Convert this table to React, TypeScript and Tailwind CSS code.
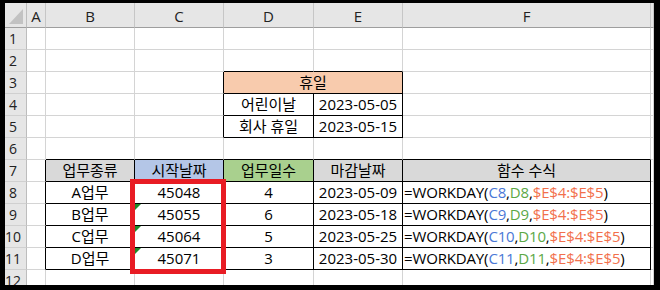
import React from "react";

const FONT = "font-['Open_Sans','Noto_Sans_CJK_KR',sans-serif]";

type Run = { t: string; c?: string };
type Cell = { v: string | Run[]; bg?: string; left?: boolean; span?: number; flag?: boolean };

const LETTERS = ["A", "B", "C", "D", "E", "F", ""];
const ROWS = 12;

const BLUE = "text-[#4a78d6]";
const GREEN = "text-[#5ca846]";
const ORANGE = "text-[#f2704c]";

const formula = (n: number): Run[] => [
  { t: "=WORKDAY(" },
  { t: `C${n}`, c: BLUE },
  { t: "," },
  { t: `D${n}`, c: GREEN },
  { t: "," },
  { t: "$E$4:$E$5", c: ORANGE },
  { t: ")" },
];

// sheet contents keyed by "row:col" (col 0 = A)
const cells: Record<string, Cell> = {
  "3:3": { v: "휴일", bg: "bg-[#f8cbad]", span: 2 },
  "4:3": { v: "어린이날" },
  "4:4": { v: "2023-05-05" },
  "5:3": { v: "회사 휴일" },
  "5:4": { v: "2023-05-15" },
  "7:1": { v: "업무종류", bg: "bg-[#d9d9d9]" },
  "7:2": { v: "시작날짜", bg: "bg-[#b4c6e7]" },
  "7:3": { v: "업무일수", bg: "bg-[#a9d08e]" },
  "7:4": { v: "마감날짜", bg: "bg-[#d9d9d9]" },
  "7:5": { v: "함수 수식", bg: "bg-[#d9d9d9]" },
};

const tasks = [
  { name: "A업무", start: "45048", days: "4", end: "2023-05-09" },
  { name: "B업무", start: "45055", days: "6", end: "2023-05-18" },
  { name: "C업무", start: "45064", days: "5", end: "2023-05-25" },
  { name: "D업무", start: "45071", days: "3", end: "2023-05-30" },
];

tasks.forEach((t, i) => {
  const r = 8 + i;
  cells[`${r}:1`] = { v: t.name };
  cells[`${r}:2`] = { v: t.start, flag: i > 0 };
  cells[`${r}:3`] = { v: t.days };
  cells[`${r}:4`] = { v: t.end };
  cells[`${r}:5`] = { v: formula(r), left: true };
});

// ranges drawn with thin black borders
const boxed = (r: number, c: number) =>
  (r >= 7 && r <= 11 && c >= 1 && c <= 5) || (r >= 3 && r <= 5 && c >= 3 && c <= 4);

function CornerCell() {
  return (
    <div className="relative bg-[#e6e6e6] border-r border-b border-r-[#bdbdbd] border-b-[#9e9e9e]">
      <svg width="21" height="24" className="absolute left-0 top-0">
        <polygon points="4,21 18,6 18,21" fill="#c2c2c2" />
      </svg>
    </div>
  );
}

function ColHeader({ label }: { label: string }) {
  return (
    <div className="flex items-center justify-center pt-[2px] bg-[#e6e6e6] border-r border-b border-r-[#c6c6c6] border-b-[#9e9e9e] text-[#222]">
      {label}
    </div>
  );
}

function RowHeader({ n }: { n: number }) {
  return (
    <div className="flex items-center justify-center pr-[5px] text-[14px] bg-[#e6e6e6] border-r border-b border-r-[#bdbdbd] border-b-[#d0d0d0] text-[#222]">
      {n}
    </div>
  );
}

function SheetCell({ r, c, cell }: { r: number; c: number; cell?: Cell }) {
  const span = cell?.span ?? 1;
  const last = c + span - 1;
  const right = boxed(r, last) || boxed(r, last + 1);
  const bottom = boxed(r, c) || boxed(r + 1, c);
  return (
    <div
      className={`relative flex items-center whitespace-nowrap overflow-visible border-r border-b ${
        right ? "border-r-black" : "border-r-[#d4d4d4]"
      } ${bottom ? "border-b-black" : "border-b-[#d4d4d4]"} ${
        cell?.left ? "justify-start pl-[1px] tracking-[-0.15px]" : "justify-center"
      } ${cell?.bg ?? ""} ${span === 2 ? "col-span-2" : ""}`}
    >
      {cell?.flag && (
        <div className="absolute left-0 top-0 w-0 h-0 border-t-[6px] border-t-[#1f8a2a] border-r-[6px] border-r-transparent" />
      )}
      {typeof cell?.v === "string"
        ? cell.v
        : cell?.v.map((run, i) => (
            <span key={i} className={run.c}>
              {run.t}
            </span>
          ))}
    </div>
  );
}

export default function App() {
  const body: React.ReactNode[] = [];
  for (let r = 1; r <= ROWS; r++) {
    body.push(<RowHeader key={`h${r}`} n={r} />);
    for (let c = 0; c < LETTERS.length; c++) {
      if (r === 3 && c === 4) continue; // merged into D3
      body.push(<SheetCell key={`${r}:${c}`} r={r} c={c} cell={cells[`${r}:${c}`]} />);
    }
  }

  return (
    <div className="w-[660px] h-[290px] bg-black pt-[3px] pl-[5px]">
      <div
        className={`relative w-[649px] h-[282px] overflow-hidden bg-white ${FONT} text-[15px] leading-none text-black`}
      >
        <div className="grid grid-cols-[22px_19px_89px_89px_90px_89px_248px_3px] grid-rows-[25px_repeat(12,22px)]">
          <CornerCell />
          {LETTERS.map((l, i) => (
            <ColHeader key={i} label={l} />
          ))}
          {body}
        </div>
        {/* highlight around the start dates */}
        <div className="absolute left-[125px] top-[176px] w-[96px] h-[95px] border-[5px] border-[#e81c24]" />
      </div>
    </div>
  );
}
